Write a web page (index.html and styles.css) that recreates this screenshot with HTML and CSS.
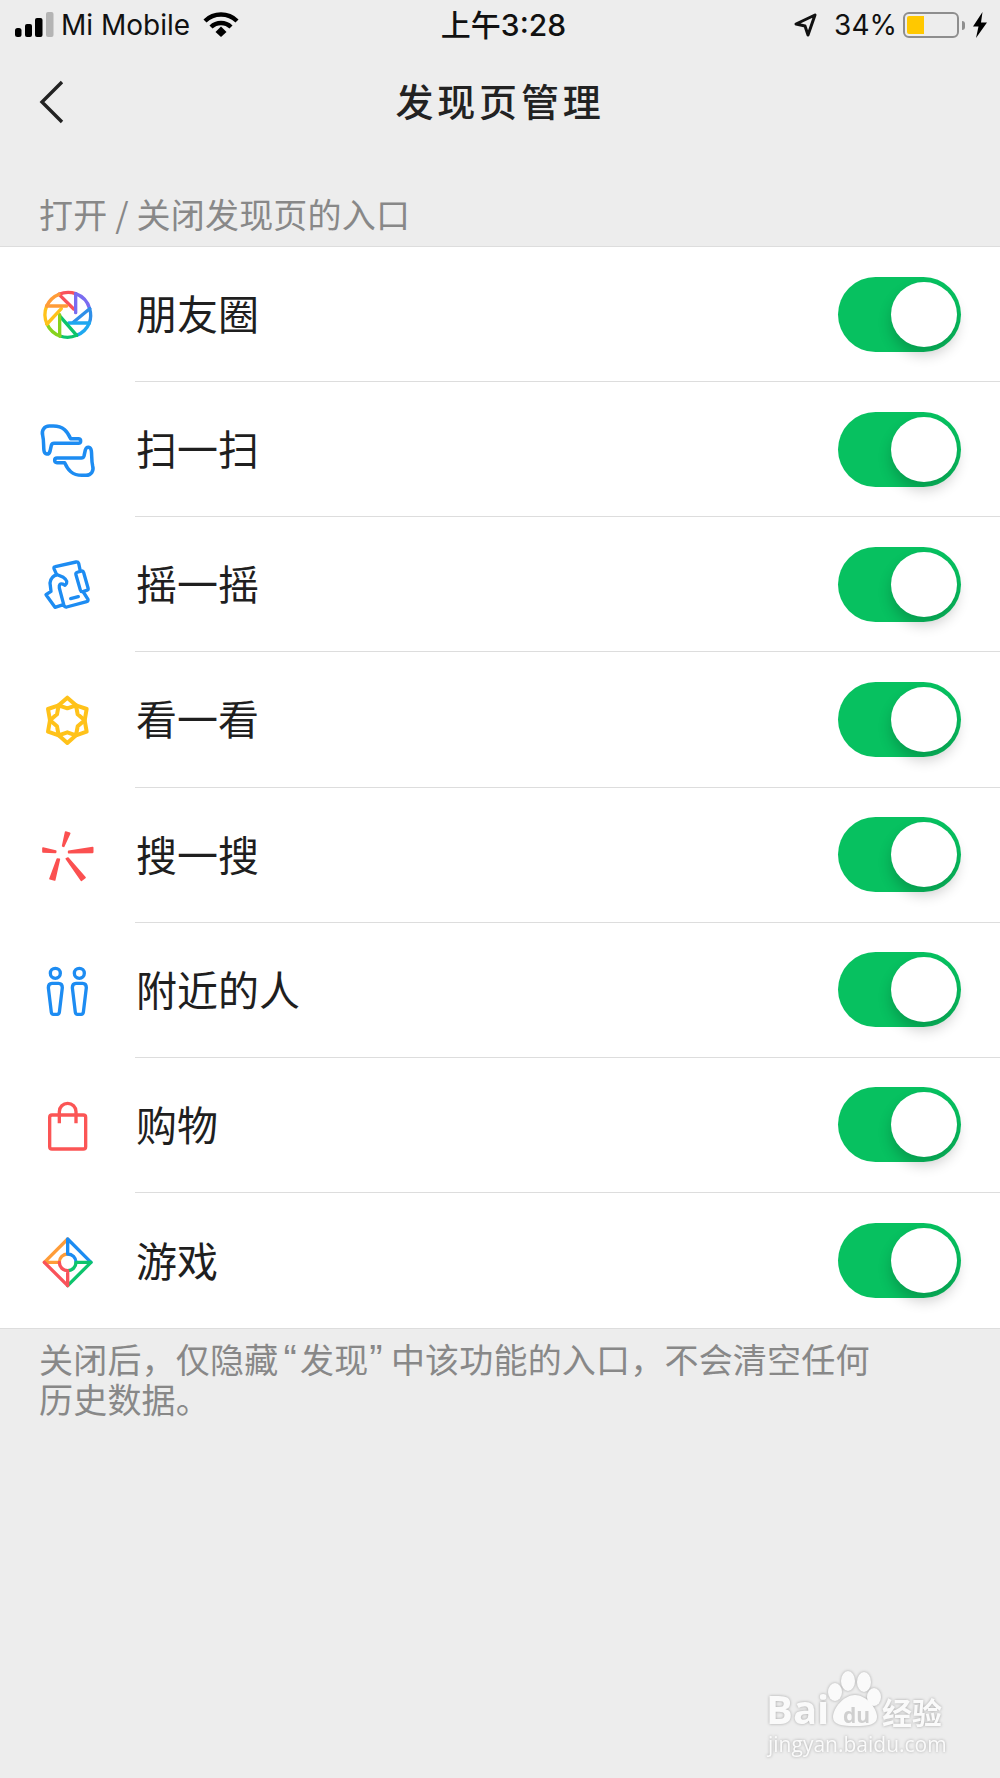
FILE: index.html
```html
<!DOCTYPE html>
<html lang="zh-CN">
<head>
  <meta charset="UTF-8">
  <meta name="viewport" content="width=device-width, initial-scale=1.0">
  <title>发现页管理</title>
  <link rel="stylesheet" href="styles.css">
</head>
<body>
  <div class="status-bar">
    <div class="status-left">
      <svg class="signal" viewBox="0 0 40 26" width="40" height="26">
        <rect x="0" y="16" width="6.5" height="9" rx="2.5" fill="#000"/>
        <rect x="10" y="12" width="7" height="13" rx="2" fill="#000"/>
        <rect x="20" y="6" width="7.5" height="19" rx="2" fill="#000"/>
        <rect x="31" y="0" width="7.5" height="25" rx="2" fill="#b4b4b4"/>
      </svg>
      <span class="carrier">Mi Mobile</span>
      <svg class="wifi" viewBox="0 0 36 26" width="36" height="26">
        <path d="M2 9 A23 23 0 0 1 34 9" fill="none" stroke="#000" stroke-width="4.4"/>
        <path d="M8 15 A14.5 14.5 0 0 1 28 15" fill="none" stroke="#000" stroke-width="4.4"/>
        <path d="M12.5 20 L18 14.5 L23.5 20 L18 25 Z" fill="#000"/>
      </svg>
    </div>
    <div class="status-time">上午3:28</div>
    <div class="status-right">
      <svg class="location" viewBox="0 0 24 24" width="24" height="24">
        <path d="M22 2 L3 11 L12 13 L15 22 Z" fill="none" stroke="#111" stroke-width="3" stroke-linejoin="round"/>
      </svg>
      <span class="battery-text">34%</span>
      <div class="battery"><div class="battery-level"></div></div>
      <div class="battery-tip"></div>
      <svg class="bolt" viewBox="0 0 16 26" width="16" height="26">
        <path d="M10.5 0 L1 14.5 H6.5 L4 26 L15 10.5 H9 Z" fill="#000"/>
      </svg>
    </div>
  </div>

  <div class="nav-bar">
    <svg class="back" viewBox="0 0 26 46" width="26" height="46">
      <path d="M23 3 L3 23 L23 43" fill="none" stroke="#222" stroke-width="3.4"/>
    </svg>
    <h1 class="nav-title">发现页管理</h1>
  </div>

  <div class="section-label">打开 / 关闭发现页的入口</div>

  <div class="list">
    <div class="row">
      <svg class="row-icon" viewBox="54 41 180 180">
        <g fill="none" stroke-width="10" stroke-linecap="round" stroke-linejoin="round">
          <path d="M117 69 A68 68 0 0 1 167 67" stroke="#f9525a"/>
          <path d="M117 69 L161 113" stroke="#f9525a"/>
          <path d="M167 67 A68 68 0 0 1 209 112" stroke="#7a6cf0"/>
          <path d="M167 67 V124" stroke="#7a6cf0"/>
          <path d="M209 112 A68 68 0 0 1 208 155" stroke="#2f8fe8"/>
          <path d="M209 112 L160 153" stroke="#2f8fe8"/>
          <path d="M208 155 A68 68 0 0 1 170 192" stroke="#1fa8f0"/>
          <path d="M208 155 H146" stroke="#1fa8f0"/>
          <path d="M170 192 A68 68 0 0 1 120 194" stroke="#0cc46c"/>
          <path d="M170 192 L121 136" stroke="#0cc46c"/>
          <path d="M120 194 A68 68 0 0 1 81 158" stroke="#86d21e"/>
          <path d="M119 194 V130" stroke="#86d21e"/>
          <path d="M81 158 A68 68 0 0 1 80 104" stroke="#ffc21a"/>
          <path d="M81 158 L124 112" stroke="#ffc21a"/>
          <path d="M80 104 A68 68 0 0 1 117 69" stroke="#ff9c38"/>
          <path d="M80 104 H140" stroke="#ff9c38"/>
        </g>
      </svg>
      <div class="row-body">
        <span class="row-name">朋友圈</span>
        <div class="toggle"><div class="knob"></div></div>
      </div>
    </div>

    <div class="row">
      <svg class="row-icon" viewBox="24 26 180 180">
        <g fill="none" stroke="#1d8cf2" stroke-width="10.5" stroke-linejoin="round">
          <path id="hand" d="M145 82 H122 C112 60 100 44 70 44 H58 C42 44 34 58 38 72 C42 88 40 105 42 118 C44 130 56 132 60 120 L64 102 Q66 96 72 96 H145 A7 7 0 0 0 145 82 Z"/>
          <use href="#hand" transform="rotate(180 113 118)"/>
        </g>
      </svg>
      <div class="row-body">
        <span class="row-name">扫一扫</span>
        <div class="toggle"><div class="knob"></div></div>
      </div>
    </div>

    <div class="row">
      <svg class="row-icon" viewBox="54 41 180 180">
        <g fill="none" stroke="#1d8cf2" stroke-width="10" stroke-linejoin="round" stroke-linecap="round">
          <path d="M110 100 L102 82 Q101 77 106 76 L168 62 Q174 61 176 66 L180 85"/>
          <rect x="174" y="90" width="24" height="60" rx="6" transform="rotate(-16 186 120)"/>
          <path d="M190 152 L204 174 Q205 180 200 181 L140 197 Q134 198 132 193 L118 140 Q116 125 128 128 L135 132 Q148 120 130 108 L112 100 Q92 105 90 125 L93 150 L78 160 L105 198 L130 190"/>
          <path d="M152 172 L175 166"/>
        </g>
      </svg>
      <div class="row-body">
        <span class="row-name">摇一摇</span>
        <div class="toggle"><div class="knob"></div></div>
      </div>
    </div>

    <div class="row">
      <svg class="row-icon" viewBox="24 27 180 180">
        <g fill="none" stroke="#ffc21a" stroke-width="12" stroke-linejoin="round">
          <path d="M112 50 L138 73 L170 84 L164 118 L170 152 L138 163 L112 186 L86 163 L54 152 L60 118 L54 84 L86 73 Z"/>
          <path d="M112 82 L138 73 L143 100 L164 118 L143 136 L138 163 L112 154 L86 163 L81 136 L60 118 L81 100 L86 73 Z"/>
        </g>
      </svg>
      <div class="row-body">
        <span class="row-name">看一看</span>
        <div class="toggle"><div class="knob"></div></div>
      </div>
    </div>

    <div class="row">
      <svg class="row-icon" viewBox="54 42 180 180">
        <g fill="#fb5050" stroke="#fb5050" stroke-width="5" stroke-linejoin="round">
          <path d="M137 63 L149 67 L131 106 L128 105 Z"/>
          <path d="M146 121 L218 110 L218 124 L146 125 Z"/>
          <path d="M139 143 L144 141 L195 200 L184 208 Z"/>
          <path d="M112 144 L118 145 L104 207 L90 203 Z"/>
          <path d="M69 111 L107 120 L107 124 L69 123 Z"/>
        </g>
      </svg>
      <div class="row-body">
        <span class="row-name">搜一搜</span>
        <div class="toggle"><div class="knob"></div></div>
      </div>
    </div>

    <div class="row">
      <svg class="row-icon" viewBox="54 447 180 180">
        <g fill="none" stroke="#1d8cf2" stroke-width="10" stroke-linejoin="round">
          <circle cx="106" cy="487" r="15"/>
          <circle cx="178" cy="487" r="15"/>
          <path d="M96 517 H116 Q127 517 127 530 L118 604 Q117 610 112 610 H100 Q95 610 94 604 L85 530 Q85 517 96 517 Z"/>
          <path d="M168 517 H188 Q199 517 199 530 L190 604 Q189 610 184 610 H172 Q167 610 166 604 L157 530 Q157 517 168 517 Z"/>
        </g>
      </svg>
      <div class="row-body">
        <span class="row-name">附近的人</span>
        <div class="toggle"><div class="knob"></div></div>
      </div>
    </div>

    <div class="row">
      <svg class="row-icon" viewBox="54 43 180 180">
        <g fill="none" stroke="#fb5555" stroke-width="10" stroke-linejoin="round">
          <rect x="89" y="103" width="108" height="102" rx="7"/>
          <path d="M118 128 V93 A25 25 0 0 1 168 93 V128"/>
        </g>
      </svg>
      <div class="row-body">
        <span class="row-name">购物</span>
        <div class="toggle"><div class="knob"></div></div>
      </div>
    </div>

    <div class="row">
      <svg class="row-icon" viewBox="54 448 180 180">
        <g fill="none" stroke-width="10" stroke-linejoin="round" stroke-linecap="round">
          <path d="M143 517 A25 25 0 0 0 118 542 H73 L143 472" stroke="#ff9c38"/>
          <path d="M143 472 L213 542 M143 472 V517 A25 25 0 0 1 168 542" stroke="#1d8cf2"/>
          <path d="M213 542 L143 612 M213 542 H168 A25 25 0 0 1 143 567" stroke="#0cc46c"/>
          <path d="M143 612 L73 542 M143 612 V567 A25 25 0 0 1 118 542" stroke="#f9525a"/>
        </g>
      </svg>
      <div class="row-body last">
        <span class="row-name">游戏</span>
        <div class="toggle"><div class="knob"></div></div>
      </div>
    </div>
  </div>

  <p class="footnote">关闭后，仅隐藏<span class="quote-open">“</span>发现<span class="quote-close">”</span>中该功能的入口，不会清空任何<br>历史数据。</p>

  <svg class="watermark" viewBox="0 0 260 130" width="260" height="130">
    <text class="wm-bai" x="46" y="84">Bai</text>
    <g class="wm-shape">
      <ellipse cx="115" cy="52" rx="7" ry="9"/>
      <ellipse cx="128" cy="41" rx="7" ry="10"/>
      <ellipse cx="144" cy="42" rx="7" ry="10"/>
      <ellipse cx="154" cy="57" rx="7" ry="9"/>
      <path d="M135 55 C146 55 157 68 157 77 C157 85 148 86 135 86 C122 86 113 85 113 77 C113 68 124 55 135 55 Z"/>
    </g>
    <text class="wm-du" x="123" y="83">du</text>
    <text class="wm-jy" x="162" y="84">经验</text>
    <text class="wm-url" x="48" y="112">jingyan.baidu.com</text>
  </svg>
</body>
</html>
```

FILE: styles.css
```css
body {
  margin: 0;
  background: #ededed;
  color: #1f1f1f;
  font-family: "Noto Sans CJK SC", sans-serif;
  position: relative;
  height: 1778px;
  overflow: hidden;
}

.status-bar {
  height: 50px;
  display: flex;
  align-items: center;
  justify-content: space-between;
  padding: 0 12px 0 15px;
  color: #111;
  font-family: Inter, "Noto Sans CJK SC", sans-serif;
  font-size: 28px;
}
.status-left,
.status-right {
  flex: 1;
  display: flex;
  align-items: center;
}
.status-right {
  justify-content: flex-end;
}
.carrier {
  margin-left: 6px;
}
.wifi {
  margin-left: 13px;
}
.status-time {
  font-size: 30px;
  font-weight: 500;
  padding: 0 0 4px 4px;
}
.battery-text {
  margin-left: 17px;
}
.battery {
  width: 56px;
  height: 26px;
  margin-left: 6px;
  box-sizing: border-box;
  border: 2px solid #8e8e8e;
  border-radius: 6px;
  padding: 2px;
}
.battery-level {
  width: 17px;
  height: 100%;
  background: #ffc800;
  border-radius: 2px 0 0 2px;
}
.battery-tip {
  width: 3px;
  height: 9px;
  margin-left: 3px;
  background: #8e8e8e;
  border-radius: 0 3px 3px 0;
}
.bolt {
  margin-left: 7px;
}

.nav-bar {
  height: 98px;
  padding-bottom: 6px;
  display: flex;
  align-items: center;
  justify-content: center;
  position: relative;
}
.back {
  position: absolute;
  left: 39px;
  top: 29px;
}
.nav-title {
  margin: 0;
  font-size: 38px;
  font-weight: 500;
  letter-spacing: 3.8px;
  color: #222;
}

.section-label {
  padding: 40px 0 12px 39px;
  font-size: 34px;
  letter-spacing: 0.2px;
  line-height: 40px;
  color: #888;
}

.list {
  background: #fff;
  border-top: 1px solid #ddd;
  border-bottom: 1px solid #ddd;
}
.row {
  display: flex;
  align-items: center;
  padding-left: 38px;
  height: 135.15px;
}
.row-icon {
  width: 60px;
  height: 60px;
  margin-right: 37px;
  flex-shrink: 0;
}
.row-body {
  flex: 1;
  height: 100%;
  box-sizing: border-box;
  display: flex;
  align-items: center;
  justify-content: space-between;
  padding-right: 39px;
  border-bottom: 1px solid #ddd;
}
.row-body.last {
  border-bottom: none;
}
.row-name {
  font-size: 41px;
  color: #1f1f1f;
  padding: 0 0 4px 1px;
}

.toggle {
  width: 123px;
  height: 75px;
  box-sizing: border-box;
  padding: 5px 4px;
  border-radius: 38px;
  background: #07c160;
  display: flex;
  justify-content: flex-end;
}
.knob {
  width: 66px;
  height: 65px;
  border-radius: 50%;
  background: #fff;
  box-shadow: 0 8px 14px rgba(0, 0, 0, 0.2);
}

.footnote {
  margin: 10px 0 0;
  padding-left: 39px;
  font-size: 34px;
  letter-spacing: 0.2px;
  line-height: 40px;
  color: #888;
}
.quote-open,
.quote-close {
  font-family: "Liberation Sans", sans-serif;
  font-size: 40px;
  line-height: 1;
}
.quote-open {
  margin: 0 3px 0 5px;
}
.quote-close {
  margin: 0 8px 0 1px;
}

.watermark {
  position: absolute;
  left: 720px;
  top: 1640px;
  filter: drop-shadow(0 0 1.5px rgba(0, 0, 0, 0.3));
}
.wm-bai {
  font-family: "Open Sans", sans-serif;
  font-size: 40px;
  font-weight: 700;
  fill: #fafafa;
}
.wm-shape {
  fill: #fafafa;
}
.wm-du {
  font-family: "Open Sans", sans-serif;
  font-size: 21px;
  font-weight: 700;
  fill: #cfcfcf;
}
.wm-jy {
  font-size: 30px;
  font-weight: 700;
  fill: #fafafa;
}
.wm-url {
  font-family: "Open Sans", sans-serif;
  font-size: 21px;
  fill: #fafafa;
}
```
